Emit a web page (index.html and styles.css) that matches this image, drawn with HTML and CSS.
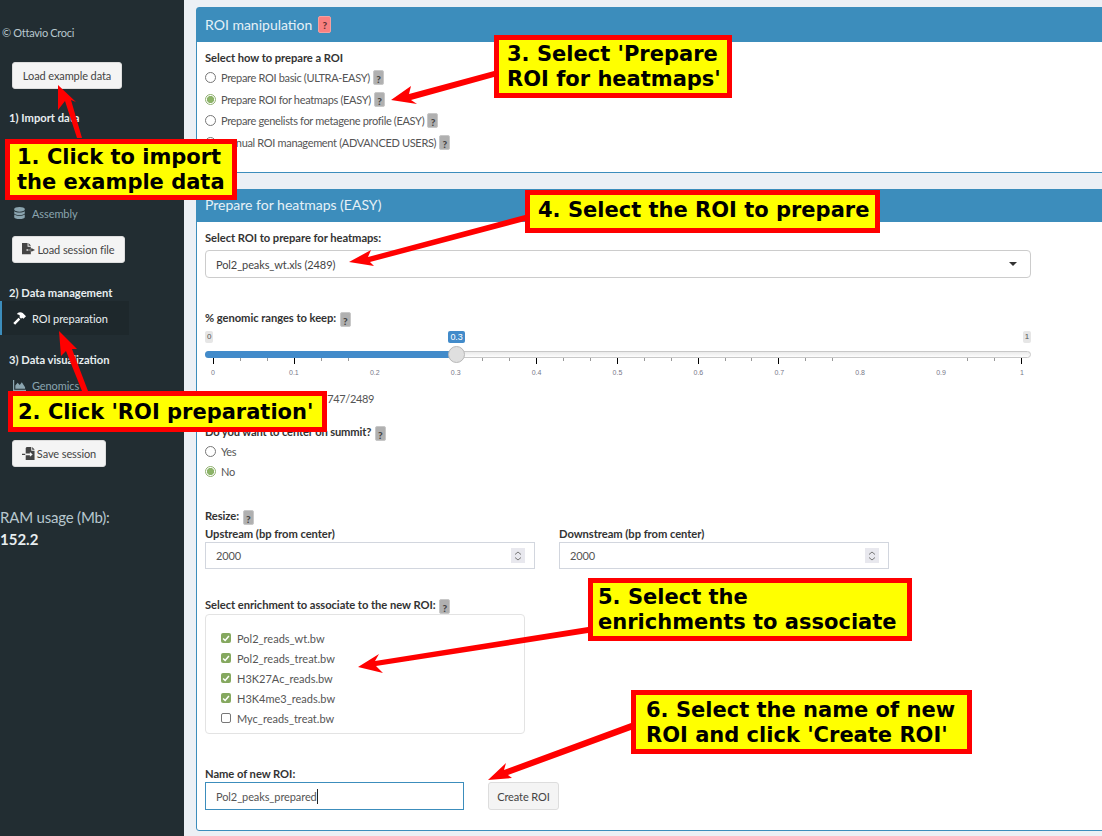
FILE: index.html
```html
<!DOCTYPE html>
<html>
    <head>
        <title>ROI preparation</title>
        <link rel="stylesheet" href="styles.css">
    </head>

    <body>
        <div class="page">
            <aside class="sidebar">
                <p class="credit">© Ottavio Croci</p>
                <button class="btn btn-example">Load example data</button>
                <h4 class="side-title side-import">1) Import data</h4>
                <div class="side-item side-assembly">
                    <svg class="side-icon" viewBox="0 0 14 16"><path fill="currentColor" d="M7 0c3.6 0 6.500 1 6.500 2.300v1.200C13.500 4.800 10.600 5.800 7 5.800S.5 4.800.5 3.500V2.300C.5 1 3.400 0 7 0zM.5 5.200C2 6.300 4.400 6.800 7 6.800s5-.5 6.500-1.600v2.400c0 1.300-2.900 2.300-6.500 2.300S.5 8.900.5 7.600zm0 4.100C2 10.400 4.400 10.900 7 10.900s5-.5 6.500-1.600v3.200c0 1.300-2.900 2.300-6.500 2.300S.5 13.800.5 12.500z"/></svg>
                    <span>Assembly</span>
                </div>
                <button class="btn btn-session">
                    <svg class="btn-icon" viewBox="0 0 14 14"><path fill="#444" d="M0 0h6v4h3.500v2.500H5v2h4.500V12H0zM7 0l2.500 2.700V3H7zM10 5.500L14 7.500l-4 2V8.300H6V6.700h4z"/></svg>Load session file
                </button>
                <h4 class="side-title side-manage">2) Data management</h4>
                <div class="side-item side-active">
                    <svg class="side-icon" viewBox="0 0 14 14"><path fill="#fff" d="M4.500 1.500C6.500 0 9 0 10.500 1.200L14 4.700 11.300 7.400 9.800 6.100 8.700 7.200 6.800 5.300 7.600 4.200C6.800 3.200 5.800 2.600 4.500 2.500zM6 6.300L7.800 8.100 2.300 13.800.3 11.800z"/></svg>
                    <span>ROI preparation</span>
                </div>
                <h4 class="side-title side-visual">3) Data visualization</h4>
                <div class="side-item side-genomics">
                    <svg class="side-icon" viewBox="0 0 14 12"><path fill="currentColor" d="M0 0h1.300v10.500H14V12H0zM2.500 9.500V6l2.500-3 2.300 2.500L9.500 2.500 13 8v1.500z"/></svg>
                    <span>Genomics</span>
                </div>
                <h4 class="side-title side-save">4) Save progress</h4>
                <button class="btn btn-save">
                    <svg class="btn-icon" viewBox="0 0 14 14"><path fill="#444" d="M5 0h5v4h3.500v10H4V9h4.500v1.500L11.500 8 8.500 5.500V7H4V1zM11 0l2.500 2.700V3H11zM0 7.300h3.500v1.400H0z"/></svg>Save session
                </button>
                <p class="ram-label">RAM usage (Mb):</p>
                <p class="ram-value">152.2</p>
            </aside>

            <main class="content">
                <section class="box box-manip">
                    <header class="box-header">ROI manipulation <span class="help help-red">?</span></header>
                    <div class="box-body">
                        <label class="field-label">Select how to prepare a ROI</label>
                        <div class="radio-row first"><span class="radio"></span>Prepare ROI basic (ULTRA-EASY) <span class="help">?</span></div>
                        <div class="radio-row"><span class="radio on"></span>Prepare ROI for heatmaps (EASY) <span class="help">?</span></div>
                        <div class="radio-row"><span class="radio"></span>Prepare genelists for metagene profile (EASY) <span class="help">?</span></div>
                        <div class="radio-row"><span class="radio"></span>Manual ROI management (ADVANCED USERS) <span class="help">?</span></div>
                    </div>
                </section>

                <section class="box box-heat">
                    <header class="box-header">Prepare for heatmaps (EASY)</header>
                    <div class="box-body">
                        <label class="field-label">Select ROI to prepare for heatmaps:</label>
                        <div class="select">Pol2_peaks_wt.xls (2489)<span class="caret"></span></div>

                        <label class="field-label slider-label">% genomic ranges to keep: <span class="help">?</span></label>
                        <div class="slider">
                            <div class="slider-ends"><span class="end">0</span><span class="end">1</span></div>
                            <span class="slider-value">0.3</span>
                            <div class="track"><div class="fill"></div></div>
                            <span class="handle"></span>
                            <div class="ticks">
                                <i class="major"></i><i></i><i></i>
                                <i class="major"></i><i></i><i></i>
                                <i class="gone"></i><i class="gone"></i><i class="gone"></i>
                                <i class="major short"></i><i></i><i></i>
                                <i class="major"></i><i></i><i></i>
                                <i class="major"></i><i></i><i></i>
                                <i class="major"></i><i></i><i></i>
                                <i class="major"></i><i></i><i></i>
                                <i class="gone"></i><i class="gone"></i><i class="gone"></i>
                                <i class="gone"></i><i></i><i></i>
                                <i class="major"></i>
                            </div>
                            <div class="tick-labels">
                                <span>0</span><span>0.1</span><span>0.2</span><span>0.3</span><span>0.4</span><span>0.5</span>
                                <span>0.6</span><span>0.7</span><span>0.8</span><span>0.9</span><span>1</span>
                            </div>
                        </div>

                        <p class="kept">Number of ranges to keep: 747/2489</p>

                        <label class="field-label summit-label">Do you want to center on summit? <span class="help">?</span></label>
                        <div class="radio-row summit-yes"><span class="radio"></span>Yes</div>
                        <div class="radio-row summit-no"><span class="radio on"></span>No</div>

                        <label class="field-label resize-label">Resize: <span class="help">?</span></label>
                        <div class="numbers">
                            <div class="number-col">
                                <label class="field-label">Upstream (bp from center)</label>
                                <div class="input number">2000<span class="spin"><svg viewBox="0 0 8 12"><path fill="none" stroke="#777" d="M1 4.500L4 2l3 2.500M1 7.500L4 10l3-2.500"/></svg></span></div>
                            </div>
                            <div class="number-col">
                                <label class="field-label">Downstream (bp from center)</label>
                                <div class="input number">2000<span class="spin"><svg viewBox="0 0 8 12"><path fill="none" stroke="#777" d="M1 4.500L4 2l3 2.500M1 7.500L4 10l3-2.500"/></svg></span></div>
                            </div>
                        </div>

                        <label class="field-label enrich-label">Select enrichment to associate to the new ROI: <span class="help">?</span></label>
                        <div class="checks">
                            <div class="check-row"><span class="check on"><svg viewBox="0 0 12 12"><path fill="none" stroke="#fff" stroke-width="1.800" d="M2.500 6.500l2.500 2.500 4.500-5.500"/></svg></span>Pol2_reads_wt.bw</div>
                            <div class="check-row"><span class="check on"><svg viewBox="0 0 12 12"><path fill="none" stroke="#fff" stroke-width="1.800" d="M2.500 6.500l2.500 2.500 4.500-5.500"/></svg></span>Pol2_reads_treat.bw</div>
                            <div class="check-row"><span class="check on"><svg viewBox="0 0 12 12"><path fill="none" stroke="#fff" stroke-width="1.800" d="M2.500 6.500l2.500 2.500 4.500-5.500"/></svg></span>H3K27Ac_reads.bw</div>
                            <div class="check-row"><span class="check on"><svg viewBox="0 0 12 12"><path fill="none" stroke="#fff" stroke-width="1.800" d="M2.500 6.500l2.500 2.500 4.500-5.500"/></svg></span>H3K4me3_reads.bw</div>
                            <div class="check-row"><span class="check"></span>Myc_reads_treat.bw</div>
                        </div>

                        <label class="field-label name-label">Name of new ROI:</label>
                        <div class="name-row">
                            <div class="input name-input"><span class="typed">Pol2_peaks_prepared</span></div>
                            <button class="btn btn-create">Create ROI</button>
                        </div>
                    </div>
                </section>
            </main>
        </div>

        <svg class="arrows" viewBox="0 0 1102 836">
            <polygon points="58,85 76,102 71,100 82,138 77,138 65,101 58,110"/>
            <polygon points="59,331 77,349 72,349 88,391 82,391 66,351 61,356"/>
            <polygon points="391,100 411,86 409,94 494,71 494,77 411,100 417,104"/>
            <polygon points="349,262 371,250 368,257 525,215 525,221 370,262 374,266"/>
            <polygon points="358,667 379,654 375,661 588,627 588,633 376,666 383,673"/>
            <polygon points="488,780 506,763 504,770 631,723 631,730 508,775 512,778"/>
        </svg>
        <div class="note note-1">1. Click to import<br>the example data</div>
        <div class="note note-2">2. Click 'ROI preparation'</div>
        <div class="note note-3">3. Select 'Prepare<br>ROI for heatmaps'</div>
        <div class="note note-4">4. Select the ROI to prepare</div>
        <div class="note note-5">5. Select the<br>enrichments to associate</div>
        <div class="note note-6">6. Select the name of new<br>ROI and click 'Create ROI'</div>
    </body>
</html>
```

FILE: styles.css
```css
html, body {
    margin: 0;
    height: 836px;
    overflow: hidden;
}
body {
    position: relative;
    font-family: "Lato", "Liberation Sans", sans-serif;
    font-size: 11px;
    letter-spacing: -0.1px;
    color: #444;
    background: #ecf0f5;
}
.page {
    display: flex;
    height: 836px;
}

/* sidebar */
.sidebar {
    flex: 0 0 184px;
    height: 836px;
    background: #222d32;
    color: #b8c7ce;
    box-sizing: border-box;
    padding-top: 26px;
    display: flex;
    flex-direction: column;
    align-items: flex-start;
}
.credit {
    margin: 0 0 0 2px;
    line-height: 14px;
    letter-spacing: -0.3px;
}
.btn {
    display: inline-flex;
    align-items: center;
    justify-content: center;
    box-sizing: border-box;
    height: 27px;
    background: #f4f4f4;
    border: 1px solid #ddd;
    border-radius: 3px;
    color: #444;
    font: inherit;
    letter-spacing: inherit;
    padding: 0;
}
.btn-example {
    width: 110px;
    margin: 22px 0 0 12px;
}
.side-title {
    margin: 0 0 0 9px;
    font-size: 11.2px;
    line-height: 14px;
    font-weight: 700;
    letter-spacing: 0;
    color: #e8eef0;
}
.side-import { margin-top: 22px; }
.side-item {
    display: flex;
    align-items: center;
    height: 14px;
}
.side-icon {
    width: 13px;
    height: 13px;
    margin: 0 6px 0 13px;
}
.side-assembly { margin-top: 81px; color: #8aa4af; }
.btn-session {
    width: 113px;
    margin: 16px 0 0 12px;
}
.btn-icon {
    width: 13px;
    height: 13px;
    margin-right: 2px;
}
.side-manage { margin-top: 23px; }
.side-active {
    box-sizing: border-box;
    width: 129px;
    height: 34px;
    margin-top: 1px;
    background: #1e282c;
    border-left: 2px solid #3c8dbc;
    color: #e8eef0;
}
.side-active .side-icon { margin-left: 11px; }
.side-visual { margin-top: 18px; }
.side-genomics { margin-top: 11px; color: #8aa4af; }
.side-save { margin-top: 20px; }
.btn-save {
    width: 94px;
    margin: 14px 0 0 12px;
}
.ram-label {
    margin: 40px 0 0;
    font-size: 15px;
    letter-spacing: -0.2px;
    line-height: 20px;
}
.ram-value {
    margin: 2px 0 0;
    font-size: 15px;
    letter-spacing: 0;
    line-height: 20px;
    font-weight: 700;
    color: #e8eef0;
}

/* main column */
.content {
    flex: 1;
    min-width: 0;
    overflow: hidden;
    padding: 7px 0 0 12px;
}
.box {
    box-sizing: border-box;
    width: 940px;
    background: #fff;
    border: 1px solid #3c8dbc;
    border-radius: 3px;
}
.box-manip { height: 166px; }
.box-heat { height: 642px; margin-top: 16px; }
.box-header {
    box-sizing: border-box;
    background: #3c8dbc;
    color: #e6f1f7;
    font-size: 14px;
    letter-spacing: 0;
    padding-left: 8px;
    display: flex;
    align-items: center;
    gap: 6px;
}
.box-manip .box-header { height: 34px; padding-bottom: 1px; }
.box-heat .box-header { height: 32px; padding-bottom: 3px; }
.box-body {
    padding: 9px 0 0 8px;
}
.field-label {
    display: block;
    font-size: 11.2px;
    font-weight: 700;
    letter-spacing: -0.05px;
    color: #333;
    line-height: 14px;
}
.help {
    display: inline-block;
    width: 11px;
    height: 15px;
    background: #b0b0b0;
    border: 1px solid #c8c8c8;
    box-sizing: border-box;
    border-radius: 2px;
    color: #444;
    font-size: 10px;
    font-weight: 900;
    line-height: 16px;
    text-align: center;
    vertical-align: -3px;
    margin-left: 1px;
}
.help-red {
    width: 13px;
    height: 17px;
    background: #f98080;
    border-color: #f4a0a0;
    color: #633;
    vertical-align: 0;
    margin: 0;
}
.radio-row {
    display: flex;
    align-items: center;
    height: 21.5px;
    letter-spacing: -0.33px;
    color: #555;
}
.radio-row .help { margin-left: 3px; }
.radio-row.first { margin-top: 2px; }
.radio {
    flex: none;
    box-sizing: border-box;
    width: 11px;
    height: 11px;
    margin-right: 5px;
    border: 1px solid #777;
    border-radius: 50%;
    background: #fff;
}
.radio.on {
    border: 1px solid #8eaf6e;
    background: radial-gradient(circle, #8cb368 3.4px, #fff 3.8px);
}
.select {
    box-sizing: border-box;
    width: 826px;
    height: 28px;
    margin-top: 5px;
    padding: 0 10px;
    display: flex;
    align-items: center;
    justify-content: space-between;
    border: 1px solid #ccc;
    border-radius: 4px;
    color: #444;
}
.caret {
    width: 0;
    height: 0;
    margin-right: 3px;
    border-left: 4px solid transparent;
    border-right: 4px solid transparent;
    border-top: 4px solid #333;
}
.slider-label { margin-top: 33px; }

/* slider */
.slider {
    position: relative;
    width: 826px;
    margin-top: 4px;
}
.slider-ends {
    display: flex;
    justify-content: space-between;
    height: 14px;
}
.end {
    padding: 0 2px;
    height: 12px;
    background: #e6e6e6;
    border-radius: 2px;
    font: 8px/11px "Liberation Sans", sans-serif;
    color: #555;
}
.slider-value {
    position: absolute;
    left: 243px;
    top: 0;
    width: 17px;
    height: 12px;
    background: #428bca;
    border-radius: 2px;
    color: #fff;
    font: 9px/12px "Liberation Sans", sans-serif;
    text-align: center;
}
.track {
    box-sizing: border-box;
    height: 7px;
    margin-top: 6px;
    border: 1px solid #c8c8c8;
    border-radius: 4px;
    background: linear-gradient(#eaeaea, #fdfdfd);
}
.fill {
    width: 251px;
    height: 7px;
    margin: -1px;
    border-radius: 4px 0 0 4px;
    background: #428bca;
}
.handle {
    position: absolute;
    left: 243px;
    top: 15px;
    box-sizing: border-box;
    width: 17px;
    height: 17px;
    border: 1px solid #b8b8b8;
    border-radius: 50%;
    background: #dfdfdf;
}
.ticks {
    display: flex;
    justify-content: space-between;
    align-items: flex-start;
    height: 6px;
    padding: 0 9px 0 8px;
}
.ticks i {
    width: 1px;
    height: 3px;
    background: #999;
}
.ticks i.major {
    height: 6px;
    background: #000;
}
.ticks i.short { height: 3px; }
.ticks i.gone { visibility: hidden; }
.tick-labels {
    display: flex;
    justify-content: space-between;
    padding: 0 9px 0 8px;
    margin-top: 3px;
    font: 7px/11px "Liberation Sans", sans-serif;
    letter-spacing: 0;
    color: #778;
}
.tick-labels span {
    width: 0;
    display: flex;
    justify-content: center;
}
.kept {
    margin: 14px 0 0;
    line-height: 14px;
    letter-spacing: -0.33px;
    color: #555;
}
.summit-label { margin-top: 19px; letter-spacing: -0.15px; }
.summit-yes { margin-top: 0; height: 20px; }
.summit-no { height: 20px; }
.resize-label { margin-top: 28px; }
.numbers {
    display: flex;
    gap: 24px;
    margin-top: 2px;
}
.number-col .field-label { margin-bottom: 1px; }
.input {
    box-sizing: border-box;
    height: 27px;
    padding-left: 10px;
    display: flex;
    align-items: center;
    border: 1px solid #d2d6de;
    color: #555;
}
.number {
    position: relative;
    width: 330px;
}
.spin {
    position: absolute;
    right: 9px;
    top: 5px;
    width: 14px;
    height: 15px;
    display: flex;
    align-items: center;
    justify-content: center;
    background: #e8e8ee;
}
.spin svg {
    width: 8px;
    height: 12px;
}
.enrich-label { margin-top: 29px; }
.checks {
    box-sizing: border-box;
    width: 320px;
    height: 120px;
    margin-top: 0;
    padding-top: 13px;
    border: 1px solid #e3e3e3;
    border-radius: 4px;
}
.check-row {
    display: flex;
    align-items: center;
    height: 20px;
    padding-left: 15px;
    letter-spacing: 0;
    color: #555;
}
.check {
    flex: none;
    box-sizing: border-box;
    width: 10px;
    height: 10px;
    margin-right: 6px;
    border: 1px solid #777;
    border-radius: 2px;
}
.check.on {
    border: 0;
    background: #85a85f;
}
.check svg {
    display: block;
    width: 10px;
    height: 10px;
}
.name-label { margin-top: 33px; }
.name-row {
    display: flex;
    gap: 24px;
    margin-top: 1px;
}
.name-input {
    width: 259px;
    height: 28px;
    border-color: #3c8dbc;
}
.typed {
    border-right: 1px solid #222;
    line-height: 15px;
}
.btn-create {
    width: 71px;
    height: 28px;
}

/* tutorial notes */
.arrows {
    position: absolute;
    left: 0;
    top: 0;
    width: 1102px;
    height: 836px;
    fill: #f00;
}
.note {
    position: absolute;
    box-sizing: border-box;
    background: #ff0;
    border: 4px solid #f00;
    outline: 1px solid #f00;
    font: 700 21px/25px "DejaVu Sans", sans-serif;
    letter-spacing: 0;
    color: #000;
    white-space: nowrap;
}
.note-1 { left: 6px; top: 140px; width: 230px; height: 59px; padding: 1px 0 0 7px; }
.note-2 { left: 9px; top: 392px; width: 317px; height: 39px; padding: 4px 0 0 5px; }
.note-3 { left: 495px; top: 36px; width: 236px; height: 61px; padding: 2px 0 0 8px; }
.note-4 { left: 526px; top: 191px; width: 353px; height: 41px; padding: 3px 0 0 8px; }
.note-5 { left: 589px; top: 579px; width: 322px; height: 61px; padding: 2px 0 0 5px; }
.note-6 { left: 632px; top: 691px; width: 339px; height: 62px; padding: 3px 0 0 10px; }
```
